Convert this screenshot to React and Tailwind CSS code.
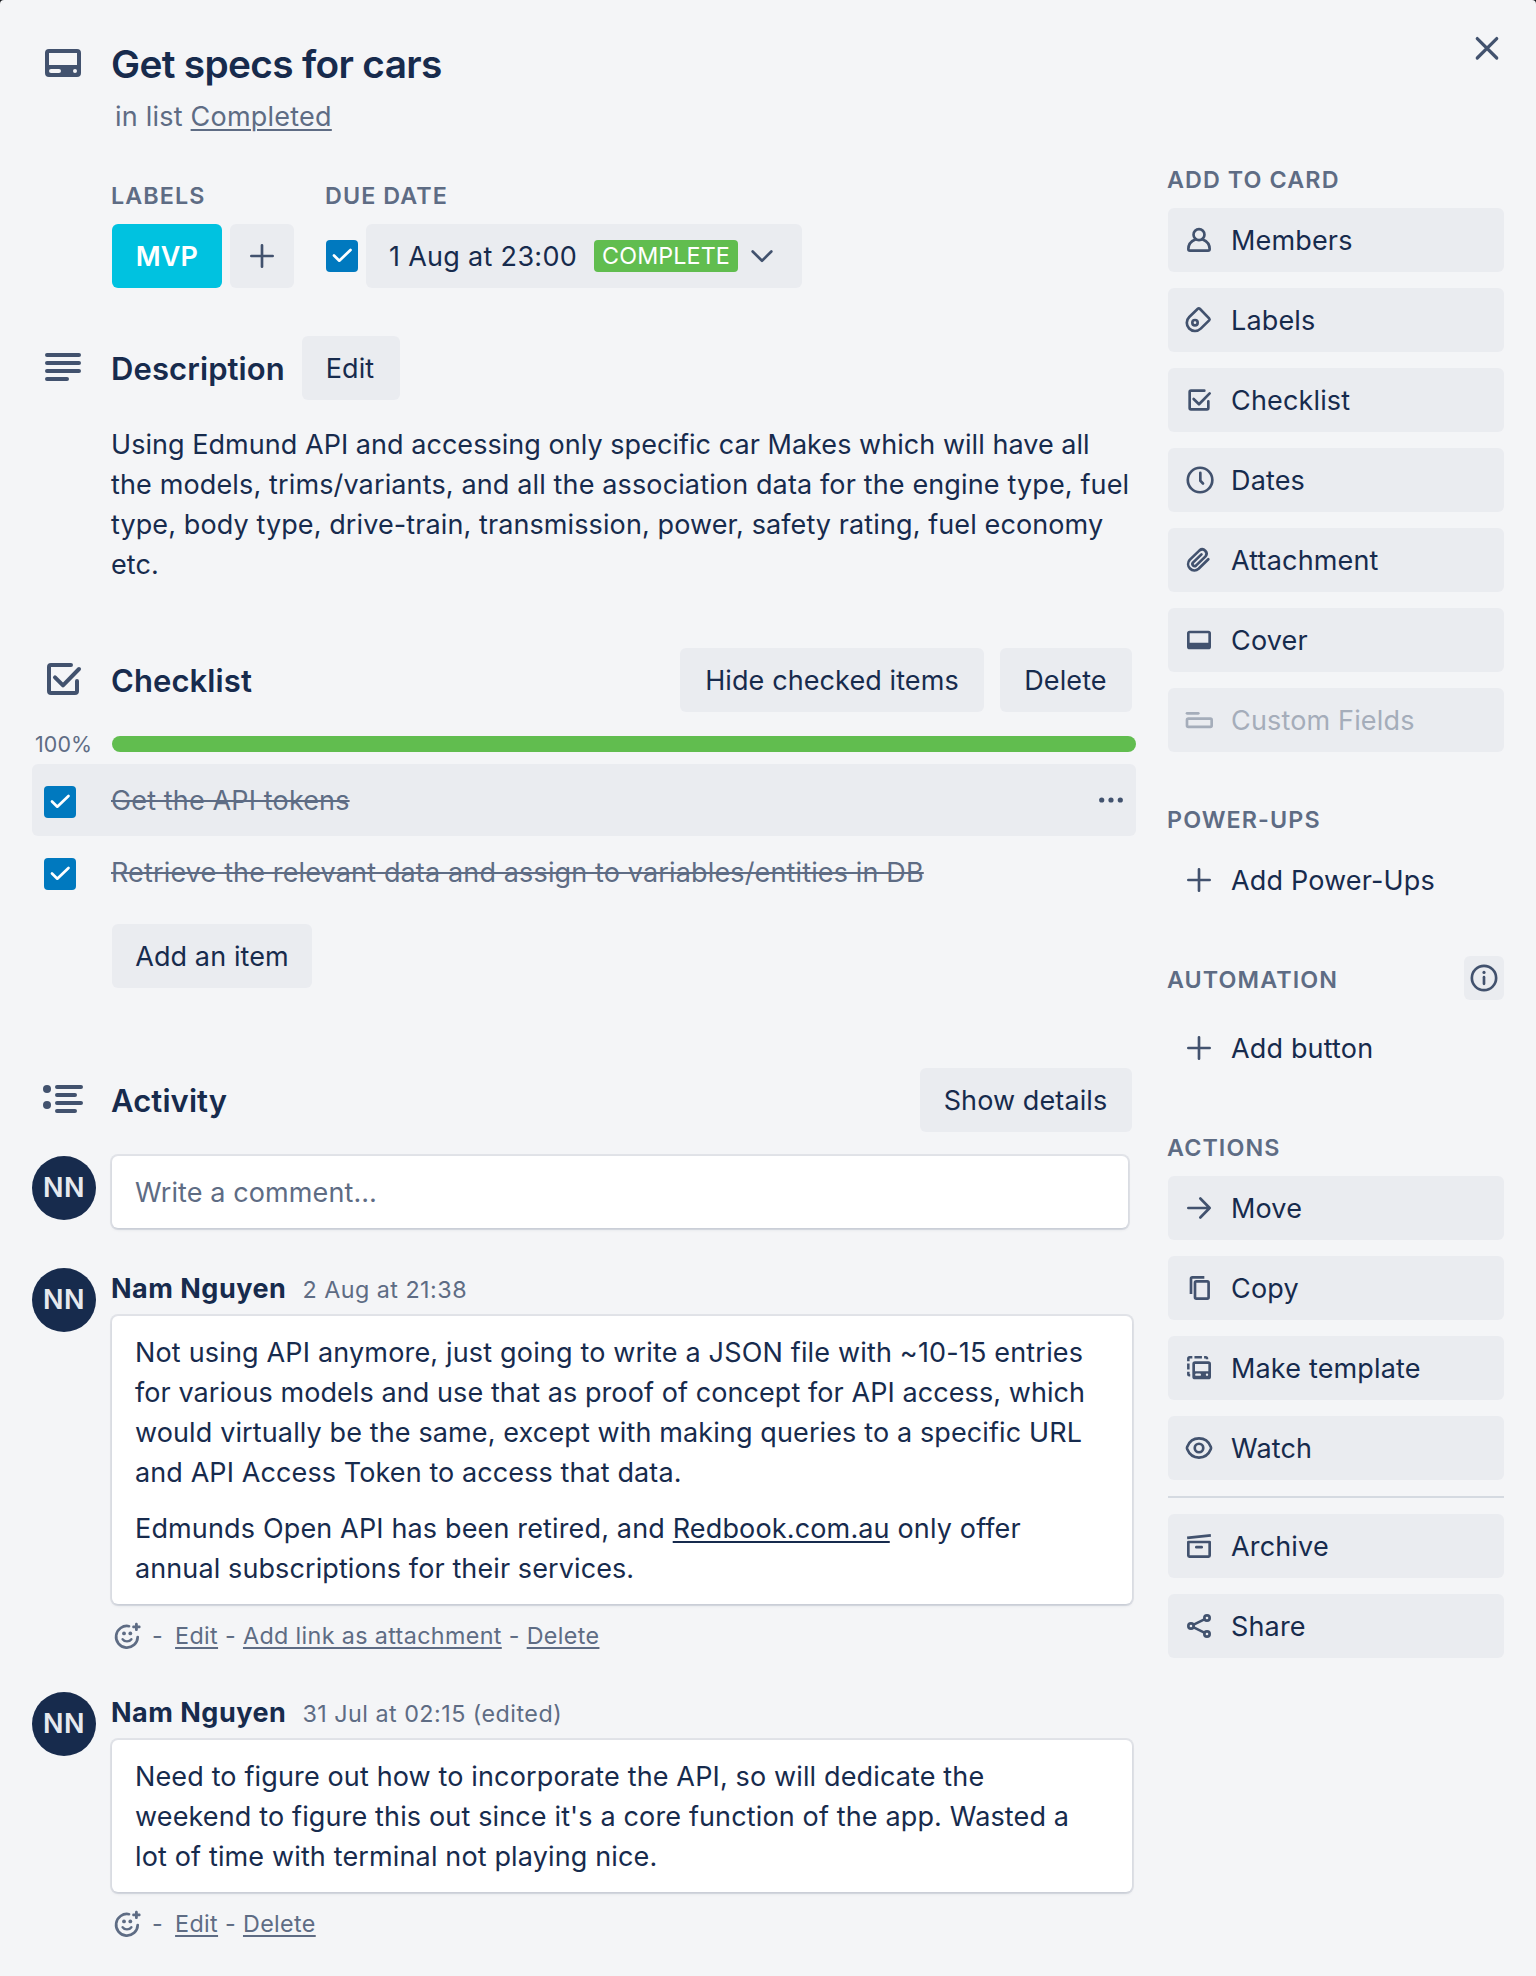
import React from "react";

/* ---------- Icons (24-unit grid) ---------- */

function Icon({ size = 32, className = "", children }) {
  return (
    <svg
      width={size}
      height={size}
      viewBox="0 0 24 24"
      fill="none"
      stroke="currentColor"
      strokeWidth="2"
      strokeLinecap="round"
      strokeLinejoin="round"
      className={`shrink-0 text-[#42526e] ${className}`}
    >
      {children}
    </svg>
  );
}

const CardIcon = () => (
  <Icon size={48}>
    <path
      stroke="none"
      fill="currentColor"
      fillRule="evenodd"
      d="M5 5h14a2 2 0 0 1 2 2v10a2 2 0 0 1-2 2H5a2 2 0 0 1-2-2V7a2 2 0 0 1 2-2Zm0 2v6h14V7H5Zm1 8a1 1 0 1 0 0 2h4a1 1 0 1 0 0-2H6Zm12 0a1 1 0 1 0 0 2 1 1 0 0 0 0-2Z"
    />
  </Icon>
);

const DescriptionIcon = () => (
  <Icon size={48}>
    <path d="M4 6h16M4 10h16M4 14h16M4 18h10" />
  </Icon>
);

const ActivityIcon = () => (
  <Icon size={48}>
    <circle cx="4" cy="7" r="2" fill="currentColor" stroke="none" />
    <circle cx="4" cy="15" r="2" fill="currentColor" stroke="none" />
    <path d="M9 6h12M9 10h9M9 14h12M9 18h9" />
  </Icon>
);

const ChecklistIcon = ({ size }) => (
  <Icon size={size}>
    <path d="M16 5H6a1 1 0 0 0-1 1v12a1 1 0 0 0 1 1h12a1 1 0 0 0 1-1v-5" />
    <path d="M8 11.2l4 4L20 7" />
  </Icon>
);

const PlusIcon = () => (
  <Icon>
    <path d="M12 4v16M4 12h16" />
  </Icon>
);

const ChevronIcon = () => (
  <Icon>
    <path d="M5 8.6l7 7 7-7" />
  </Icon>
);

const CloseIcon = () => (
  <Icon>
    <path strokeWidth="2.4" d="M4.7 4.9l14.6 14.6M19.3 4.9L4.7 19.5" />
  </Icon>
);

const MemberIcon = () => (
  <Icon>
    <circle cx="12" cy="8" r="4.1" />
    <path d="M9.2 11.6C6.2 12.8 4 15.6 4 18.8c0 .7.5 1.2 1.2 1.2h13.6c.7 0 1.2-.5 1.2-1.2 0-3.2-2.2-6-5.2-7.2" />
  </Icon>
);

const LabelIcon = () => (
  <Icon>
    <path d="M4.7 9.7l6.4-6.1a1.1 1.1 0 0 1 1.5 0l7 7.2a1.1 1.1 0 0 1 0 1.5l-6.3 6.2a6.15 6.15 0 0 1-8.6-8.800Z" />
    <circle cx="9" cy="14" r="2" />
  </Icon>
);

const ClockIcon = () => (
  <Icon>
    <circle cx="12.8" cy="12" r="9.2" />
    <path d="M13 6.600v6l2 2" />
  </Icon>
);

const AttachmentIcon = () => (
  <Icon>
    <path d="M19 11.4l-7.3 7.2a4.75 4.75 0 0 1-6.7-6.7l7.4-7.1a3.2 3.2 0 0 1 4.5 4.5l-7.2 6.9a1.6 1.6 0 0 1-2.25-2.25l6.4-6.2" />
  </Icon>
);

const CoverIcon = () => (
  <Icon>
    <path
      stroke="none"
      fill="currentColor"
      fillRule="evenodd"
      d="M5 5h14a2 2 0 0 1 2 2v10a2 2 0 0 1-2 2H5a2 2 0 0 1-2-2V7a2 2 0 0 1 2-2Zm0 2v7h14V7H5Z"
    />
  </Icon>
);

const FieldsIcon = () => (
  <Icon className="text-[#a5adba]">
    <path d="M3 7h8.5" />
    <rect x="3" y="11" width="18.500" height="6.200" rx="1" />
  </Icon>
);

const InfoIcon = () => (
  <Icon>
    <circle cx="12" cy="12" r="9.1" />
    <circle cx="12" cy="7.8" r="1.2" fill="currentColor" stroke="none" />
    <path d="M12 11.400v5" />
  </Icon>
);

const MoveIcon = () => (
  <Icon>
    <path d="M4 12h16M13 4.900l7 7.100-7 7.100" />
  </Icon>
);

const CopyIcon = () => (
  <Icon>
    <path strokeLinecap="butt" d="M16 4H7a1 1 0 0 0-1 1v11.500" />
    <rect x="9" y="7" width="10.2" height="13" rx="1" />
  </Icon>
);

const TemplateIcon = () => (
  <Icon>
    <path
      stroke="none"
      fill="currentColor"
      fillRule="evenodd"
      d="M9 7h10a2 2 0 0 1 2 2v9.500a2 2 0 0 1-2 2H9a2 2 0 0 1-2-2V9a2 2 0 0 1 2-2Zm0 2v5.500h10V9H9Zm1 7.100a.9.900 0 1 0 0 1.800h2.600a.9.900 0 1 0 0-1.800H10Zm8 0a.9.900 0 1 0 0 1.800.9.900 0 0 0 0-1.800Z"
    />
    <path
      strokeLinecap="butt"
      strokeWidth="1.900"
      d="M4 7V5a1 1 0 0 1 1-1h2M8.600 4h5.600M15.800 4h1.200a1 1 0 0 1 1 1v.4M4 8.600v4.600M4 14.800v2a.6.600 0 0 0 .6.600h.8"
    />
  </Icon>
);

const WatchIcon = () => (
  <Icon>
    <path d="M3.200 13c-.3-.6-.3-1.400 0-2C4.700 7.300 8 4.800 12 4.800S19.300 7.300 20.800 11c.3.600.3 1.400 0 2-1.500 3.700-4.800 6.200-8.800 6.200S4.700 16.700 3.200 13Z" />
    <circle cx="12" cy="12" r="3.2" />
  </Icon>
);

const ArchiveIcon = () => (
  <Icon>
    <path strokeLinecap="butt" d="M3.100 5.900L20.900 4" />
    <path d="M4 9h16v10.200a.8.800 0 0 1-.8.800H4.800a.8.800 0 0 1-.8-.8Z" />
    <path d="M10 12.900h4" />
  </Icon>
);

const ShareIcon = () => (
  <Icon>
    <circle cx="6" cy="12" r="2" />
    <circle cx="18" cy="6" r="2" />
    <circle cx="18" cy="18" r="2" />
    <path d="M8 11l8-4M8 13l8 4" />
  </Icon>
);

const DotsIcon = () => (
  <svg width="32" height="32" viewBox="0 0 32 32" className="text-[#42526e]" fill="currentColor">
    <circle cx="6.7" cy="16" r="2.6" />
    <circle cx="16" cy="16" r="2.6" />
    <circle cx="25.3" cy="16" r="2.6" />
  </svg>
);

const SmileyIcon = () => (
  <svg
    width="32"
    height="32"
    viewBox="0 0 32 32"
    fill="none"
    stroke="currentColor"
    strokeWidth="2.7"
    strokeLinecap="round"
    className="shrink-0"
  >
    <path d="M17 6.200A10.800 10.800 0 1 0 25.700 17" />
    <path strokeWidth="2.400" d="M10.600 19.300c2 2.700 6.800 2.700 8.800 0" />
    <circle cx="12" cy="13.4" r="1.9" fill="currentColor" stroke="none" />
    <circle cx="18.3" cy="13.4" r="1.9" fill="currentColor" stroke="none" />
    <path
      fill="currentColor"
      stroke="none"
      d="M24.400 2.800c.8 0 1.400.6 1.400 1.300v1.500h1.400c.8 0 1.400.5 1.400 1.300s-.6 1.300-1.400 1.300h-1.400v1.500c0 .7-.6 1.300-1.400 1.300s-1.400-.6-1.400-1.300V8.200h-1.400c-.8 0-1.400-.5-1.400-1.300s.6-1.300 1.400-1.300h1.400V4.100c0-.7.6-1.300 1.400-1.300Z"
    />
  </svg>
);

/* ---------- Shared pieces ---------- */

function Checkbox() {
  return (
    <span className="flex size-8 shrink-0 rounded-[4px] bg-[#0079bf]">
      <svg width="32" height="32" viewBox="0 0 32 32" fill="none" stroke="#fff" strokeWidth="2.7" strokeLinecap="round" strokeLinejoin="round">
        <path d="M8 15.500l5.300 5.200L24.500 10" />
      </svg>
    </span>
  );
}

function Button({ className = "", children }) {
  return (
    <button className={`flex h-16 shrink-0 items-center justify-center rounded-md bg-[#eaecf0] leading-[40px] ${className}`}>
      {children}
    </button>
  );
}

function Avatar() {
  return (
    <span className="flex size-16 shrink-0 items-center justify-center rounded-full bg-[#172b4d] pt-px font-semibold tracking-[0.5px] text-[#e6e9ee]">
      NN
    </span>
  );
}

function SectionHeader({ icon, title, className = "", children }) {
  return (
    <div className={`flex h-16 items-start ${className}`}>
      <div className="flex w-[111px] shrink-0 pt-[7px] pl-[39px]">{icon}</div>
      <h3 className="text-[31px] leading-[66px] font-semibold">{title}</h3>
      {children}
    </div>
  );
}

function Heading({ className = "", children }) {
  return (
    <h4 className={`text-[23.3px] leading-[40px] font-semibold tracking-[1.1px] text-[#5e6c84] ${className}`}>
      {children}
    </h4>
  );
}

function SideItem({ icon, label, plain, muted }) {
  return (
    <button
      className={`flex h-16 w-[336px] shrink-0 items-center gap-4 rounded-md pl-[15px] text-left tracking-[0.16px] ${
        plain ? "" : "bg-[#eaecf0]"
      } ${muted ? "text-[#a5adba]" : ""}`}
    >
      {icon}
      <span className="pt-[2px]">{label}</span>
    </button>
  );
}

function ChecklistItem({ label, active }) {
  return (
    <div className={`ml-8 flex h-[72px] w-[1104px] items-center rounded-md pl-3 ${active ? "bg-[#eaecf0]" : ""}`}>
      <div className="pt-[4px]">
        <Checkbox />
      </div>
      <span className="ml-[35px] flex-1 pt-[2px] tracking-[0.14px] text-[#5e6c84] line-through decoration-2">{label}</span>
      {active && (
        <span className="mr-[9px]">
          <DotsIcon />
        </span>
      )}
    </div>
  );
}

function Link({ children }) {
  return <a className="underline decoration-2 underline-offset-[3px]">{children}</a>;
}

function Comment({ date, actions, className = "", children }) {
  return (
    <article className={`flex pl-8 ${className}`}>
      <Avatar />
      <div className="ml-[15px] flex flex-col">
        <div className="flex h-12 items-start leading-[42px]">
          <span className="font-bold tracking-[0.5px]">Nam Nguyen</span>
          <span className="ml-4 text-[23.3px] leading-[44px] tracking-[0.48px] text-[#5e6c84]">{date}</span>
        </div>
        <div className="ml-px w-[1020px] rounded-md bg-white pt-[17px] pb-[15px] pl-[23px] leading-[40px] whitespace-nowrap shadow-[0_2px_4px_-2px_rgba(9,30,66,0.25),0_0_0_2px_rgba(9,30,66,0.08)]">
          {children}
        </div>
        <div className="mt-3 flex h-10 items-center pl-px text-[23.3px] tracking-[0.36px] text-[#5e6c84]">
          <SmileyIcon />
          <span className="mr-[12px] ml-2">-</span>
          <span>
            {actions.map((action, i) => (
              <React.Fragment key={action}>
                {i > 0 && " - "}
                <Link>{action}</Link>
              </React.Fragment>
            ))}
          </span>
        </div>
      </div>
    </article>
  );
}

/* ---------- Page ---------- */

export default function App() {
  return (
    <div className="h-[1976px] w-[1536px] overflow-hidden bg-[#15181c]">
      <div className="flex h-full rounded-t-[4px] bg-[#f4f5f7] font-['Inter','Liberation_Sans',sans-serif] text-[27px] tracking-[0.1px] text-[#172b4d]">
        <main className="w-[1167px] shrink-0">
          {/* Title */}
          <header className="flex pt-[39px]">
            <div className="w-[111px] shrink-0 pl-[39px]">
              <CardIcon />
            </div>
            <div>
              <h2 className="mt-px text-[38.8px] leading-[48px] font-semibold tracking-[-0.66px]">Get specs for cars</h2>
              <p className="mt-[9px] ml-[4px] leading-[40px] tracking-[0.22px] text-[#5e6c84]">
                in list <Link>Completed</Link>
              </p>
            </div>
          </header>

          {/* Labels and due date */}
          <div className="mt-[39px] flex gap-8 pl-[112px]">
            <div>
              <Heading className="-ml-px h-12">LABELS</Heading>
              <div className="flex gap-2">
                <span className="flex h-16 w-[110px] items-center justify-center rounded-md bg-[#00c2e0] pt-[2px] font-semibold text-white">
                  MVP
                </span>
                <Button className="w-16">
                  <PlusIcon />
                </Button>
              </div>
            </div>
            <div>
              <Heading className="-ml-px h-12">DUE DATE</Heading>
              <div className="flex items-center gap-2">
                <Checkbox />
                <Button className="w-[436px] justify-start pl-[23px]">
                  <span className="w-[205px] pt-[2px] text-left tracking-[0.3px]">1 Aug at 23:00</span>
                  <span className="flex h-8 w-36 items-center justify-center rounded-[4px] bg-[#61bd4f] text-[23.3px] text-white">
                    COMPLETE
                  </span>
                  <span className="ml-2">
                    <ChevronIcon />
                  </span>
                </Button>
              </div>
            </div>
          </div>

          {/* Description */}
          <SectionHeader className="mt-12" icon={<DescriptionIcon />} title="Description">
            <Button className="ml-auto mr-[767px] w-[98px] pt-[2px] pr-[2px]">Edit</Button>
          </SectionHeader>
          <p className="mt-[25px] ml-[111px] leading-[40px] whitespace-nowrap">
            <span className="tracking-[0.04px]">
              Using Edmund API and accessing only specific car Makes which will have all
            </span>
            <br />
            <span className="tracking-[0.135px]">
              the models, trims/variants, and all the association data for the engine type, fuel
            </span>
            <br />
            type, body type, drive-train, transmission, power, safety rating, fuel economy
            <br />
            etc.
          </p>

          {/* Checklist */}
          <SectionHeader className="mt-[63px]" icon={<ChecklistIcon size={48} />} title="Checklist">
            <div className="mr-[35px] ml-auto flex gap-4">
              <Button className="w-[304px] pt-[2px]">Hide checked items</Button>
              <Button className="w-[132px] pt-[2px] pr-px">Delete</Button>
            </div>
          </SectionHeader>
          <div className="mt-6 flex h-4 items-center">
            <span className="w-[112px] pl-[35px] text-[21.4px] text-[#5e6c84]">100%</span>
            <div className="h-4 w-[1024px] rounded-full bg-[#61bd4f]" />
          </div>
          <div className="mt-3">
            <ChecklistItem active label="Get the API tokens" />
            <ChecklistItem label="Retrieve the relevant data and assign to variables/entities in DB" />
          </div>
          <Button className="mt-4 ml-[112px] w-[200px] pt-[2px]">Add an item</Button>

          {/* Activity */}
          <SectionHeader className="mt-20" icon={<ActivityIcon />} title="Activity">
            <Button className="mr-[35px] ml-auto w-[212px] pt-[2px] pr-px">Show details</Button>
          </SectionHeader>
          <div className="mt-6 flex pl-8">
            <Avatar />
            <div className="ml-4 flex h-[72px] w-[1016px] items-center rounded-md bg-white pt-[2px] pl-[23px] text-[#5e6c84] shadow-[0_2px_4px_-2px_rgba(9,30,66,0.25),0_0_0_2px_rgba(9,30,66,0.08)]">
              Write a comment…
            </div>
          </div>

          <Comment className="mt-10" date="2 Aug at 21:38" actions={["Edit", "Add link as attachment", "Delete"]}>
            <p>
              <span className="tracking-[0.17px]">
                Not using API anymore, just going to write a JSON file with ~10-15 entries
              </span>
              <br />
              <span className="tracking-[0.08px]">
                for various models and use that as proof of concept for API access, which
              </span>
              <br />
              <span className="tracking-[0.12px]">
                would virtually be the same, except with making queries to a specific URL
              </span>
              <br />
              and API Access Token to access that data.
            </p>
            <p className="mt-4">
              <span className="tracking-[0.15px]">
                Edmunds Open API has been retired, and <Link>Redbook.com.au</Link> only offer
              </span>
              <br />
              annual subscriptions for their services.
            </p>
          </Comment>

          <Comment className="mt-9" date="31 Jul at 02:15 (edited)" actions={["Edit", "Delete"]}>
            <p className="tracking-[0.14px]">
              Need to figure out how to incorporate the API, so will dedicate the
              <br />
              weekend to figure this out since it's a core function of the app. Wasted a
              <br />
              lot of time with terminal not playing nice.
            </p>
          </Comment>
        </main>

        <aside className="w-[337px] shrink-0 pl-px">
          <div className="flex justify-end pt-8 pr-[1px]">
            <CloseIcon />
          </div>
          <Heading className="mt-24 -ml-px h-12">ADD TO CARD</Heading>
          <div className="flex flex-col gap-4">
            <SideItem icon={<MemberIcon />} label="Members" />
            <SideItem icon={<LabelIcon />} label="Labels" />
            <SideItem icon={<ChecklistIcon />} label="Checklist" />
            <SideItem icon={<ClockIcon />} label="Dates" />
            <SideItem icon={<AttachmentIcon />} label="Attachment" />
            <SideItem icon={<CoverIcon />} label="Cover" />
            <SideItem muted icon={<FieldsIcon />} label="Custom Fields" />
          </div>

          <Heading className="mt-12 -ml-px h-12">POWER-UPS</Heading>
          <SideItem plain icon={<PlusIcon />} label="Add Power-Ups" />

          <div className="mt-11 flex h-[60px] items-start justify-between">
            <Heading className="-ml-px pt-1">AUTOMATION</Heading>
            <button className="flex h-11 w-10 items-center justify-center rounded-md bg-[#eaecf0]">
              <InfoIcon />
            </button>
          </div>
          <SideItem plain icon={<PlusIcon />} label="Add button" />

          <Heading className="mt-12 -ml-px h-12">ACTIONS</Heading>
          <div className="flex flex-col gap-4">
            <SideItem icon={<MoveIcon />} label="Move" />
            <SideItem icon={<CopyIcon />} label="Copy" />
            <SideItem icon={<TemplateIcon />} label="Make template" />
            <SideItem icon={<WatchIcon />} label="Watch" />
            <hr className="h-[2px] border-0 bg-[#d5dae1]" />
            <SideItem icon={<ArchiveIcon />} label="Archive" />
            <SideItem icon={<ShareIcon />} label="Share" />
          </div>
        </aside>
      </div>
    </div>
  );
}
